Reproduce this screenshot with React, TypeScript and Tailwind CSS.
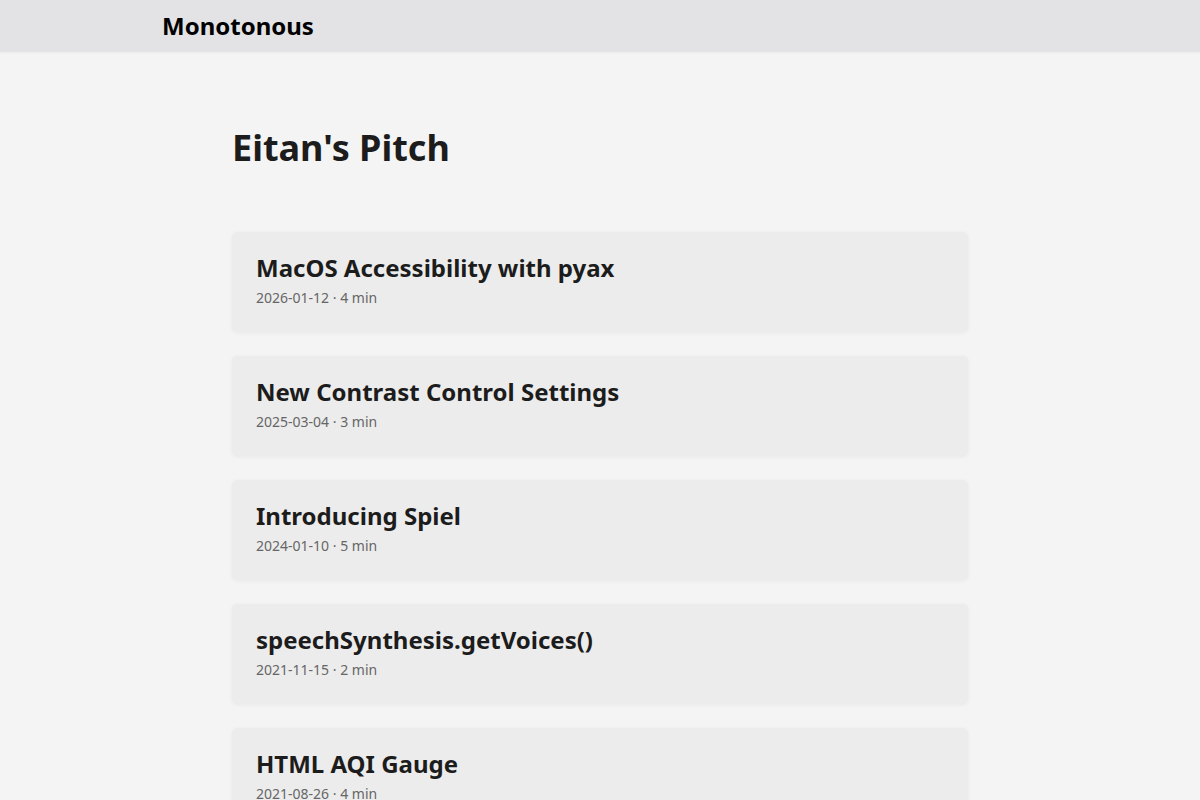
import React from 'react';

type Post = { title: string; date: string; read: string };

const posts: Post[] = [
  { title: 'MacOS Accessibility with pyax', date: '2026-01-12', read: '4 min' },
  { title: 'New Contrast Control Settings', date: '2025-03-04', read: '3 min' },
  { title: 'Introducing Spiel', date: '2024-01-10', read: '5 min' },
  { title: 'speechSynthesis.getVoices()', date: '2021-11-15', read: '2 min' },
  { title: 'HTML AQI Gauge', date: '2021-08-26', read: '4 min' },
];

const PostCard: React.FC<{ post: Post }> = ({ post }) => (
  <a
    href="#"
    className="block rounded-[5px] bg-[#ececec] px-6 pt-5 pb-6 shadow-[0_1px_4px_rgba(0,0,0,0.05)]"
  >
    <h2 className="text-[24px] leading-[32px] font-bold text-[#1c1c1c]">{post.title}</h2>
    <p className="mt-1 text-sm leading-5 text-[#666]">
      {post.date} · {post.read}
    </p>
  </a>
);

const App: React.FC = () => {
  return (
    <div className="min-h-screen bg-[#f4f4f4] font-['Noto_Sans',sans-serif] text-[#1c1c1c]">
      <header className="h-[52px] bg-[#e3e3e5] shadow-[0_1px_3px_rgba(0,0,0,0.04)]">
        <div className="mx-auto flex h-full max-w-[876px] items-center">
          <a href="#" className="text-[24px] font-bold text-black">
            Monotonous
          </a>
        </div>
      </header>

      <main className="mx-auto max-w-[736px] pt-[74px] pb-16">
        <h1 className="text-[36px] leading-[43px] font-bold text-[#1c1c1c]">Eitan's Pitch</h1>
        <div className="mt-[63px] flex flex-col gap-6">
          {posts.map((p) => (
            <PostCard key={p.title} post={p} />
          ))}
        </div>
      </main>
    </div>
  );
};

export default App;
